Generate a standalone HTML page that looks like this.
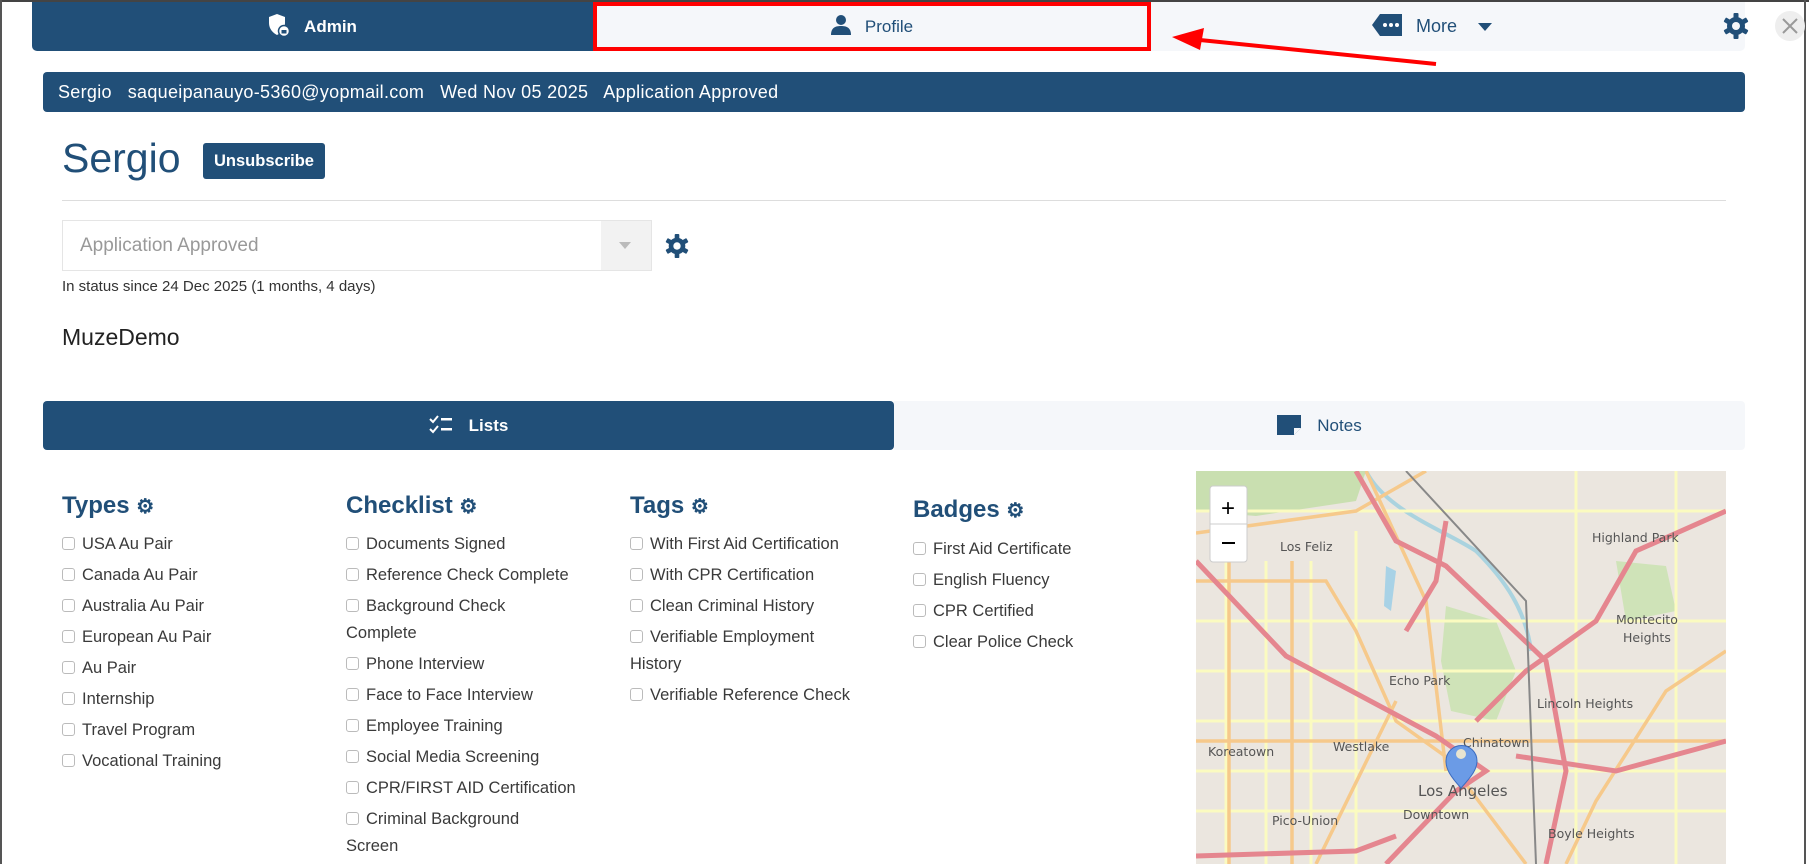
<!DOCTYPE html>
<html><head><meta charset="utf-8"><style>
*{box-sizing:border-box;margin:0;padding:0}
body{width:1809px;height:864px;overflow:hidden;background:#fff;font-family:"Liberation Sans",sans-serif;color:#222;position:relative}
.a{position:absolute}
.blue{background:#214f78;color:#fff}
.chk{position:absolute;font-size:16.5px;color:#3a3a3a;line-height:27px}
.chk i{display:inline-block;width:13px;height:13px;border:1px solid #bbb;border-radius:3px;margin-right:7px;vertical-align:-1px}
h3{position:absolute;font-size:24px;color:#214f78;font-weight:bold}
</style></head><body>
<div class="a" style="left:0;top:0;width:1809px;height:2px;background:#444"></div>
<div class="a" style="left:1804px;top:0;width:2px;height:864px;background:#555"></div>
<div class="a" style="left:0;top:0;width:2px;height:864px;background:#555"></div>
<!-- top nav -->
<div class="a" style="left:32px;top:2px;width:1713px;height:49px;background:#f5f7fa;border-radius:0 0 5px 5px"></div>
<div class="a blue" style="left:32px;top:2px;width:561px;height:49px;border-radius:0 0 0 5px;font-size:17px;font-weight:bold;line-height:49px;text-align:center">
<svg width="22" height="24" viewBox="0 0 22 24" style="vertical-align:-5px;margin-right:14px"><path d="M9 1 L17 4 V10 C17 16 13 20 9 22 C5 20 1 16 1 10 V4Z" fill="#fff"/><circle cx="16" cy="18" r="5.5" fill="#fff" stroke="#214f78" stroke-width="1.5"/><rect x="13.5" y="17" width="5" height="3.5" fill="#214f78"/></svg>Admin</div>
<div class="a" style="left:593px;top:2px;width:558px;height:49px;border:4px solid #f00;background:#f5f7fa;color:#214f78;font-size:17px;line-height:41px;text-align:center">
<svg width="20" height="20" viewBox="0 0 20 20" style="vertical-align:-3px;margin-right:14px"><circle cx="10" cy="5" r="5" fill="#214f78"/><path d="M0 20 C0 13 4 11 10 11 C16 11 20 13 20 20Z" fill="#214f78"/></svg>Profile</div>
<div class="a" style="left:1372px;top:14px;font-size:18px;color:#214f78;line-height:24px">
<svg width="30" height="22" viewBox="0 0 30 22" style="vertical-align:-4px;margin-right:14px"><path d="M8 0 H30 V22 H8 L0 11Z" fill="#214f78"/><circle cx="13" cy="11" r="2" fill="#fff"/><circle cx="19" cy="11" r="2" fill="#fff"/><circle cx="25" cy="11" r="2" fill="#fff"/></svg>More
<svg width="14" height="10" viewBox="0 0 14 10" style="margin-left:16px"><path d="M0 1 H14 L7 9Z" fill="#214f78"/></svg></div>
<svg class="a" style="left:1723px;top:13px" width="26" height="26" viewBox="0 0 26 26"><g fill="#214f78"><circle cx="13" cy="13" r="9"/><g id="t"><rect x="10.5" y="0" width="5" height="6" rx="1"/><rect x="10.5" y="20" width="5" height="6" rx="1"/></g><use href="#t" transform="rotate(60 13 13)"/><use href="#t" transform="rotate(120 13 13)"/></g><circle cx="13" cy="13" r="4" fill="#f5f7fa"/></svg>
<div class="a" style="left:1775px;top:11px;width:30px;height:30px;border-radius:50%;background:#eee"></div>
<svg class="a" style="left:1781px;top:17px" width="18" height="18"><path d="M2 2 L16 16 M16 2 L2 16" stroke="#999" stroke-width="2"/></svg>
<!-- arrow -->
<svg class="a" style="left:1160px;top:25px" width="290" height="45"><path d="M276 39 L40 15" stroke="#f00" stroke-width="4"/><path d="M12 12 L44 3 L40 25Z" fill="#f00"/></svg>
<!-- info bar -->
<div class="a blue" style="left:43px;top:72px;width:1702px;height:40px;border-radius:4px;font-size:18px;line-height:40px;padding-left:15px;letter-spacing:0.3px">Sergio &nbsp; saqueipanauyo-5360@yopmail.com &nbsp; Wed Nov 05 2025 &nbsp; Application Approved</div>
<div class="a" style="left:62px;top:135px;font-size:41px;color:#214f78">Sergio</div>
<div class="a blue" style="left:203px;top:143px;width:122px;height:36px;border-radius:3px;font-size:16.5px;font-weight:bold;line-height:36px;text-align:center">Unsubscribe</div>
<div class="a" style="left:62px;top:200px;width:1664px;height:1px;background:#ddd"></div>
<div class="a" style="left:62px;top:220px;width:590px;height:51px;border:1px solid #e5e5e5;font-size:19px;color:#999;line-height:49px;padding-left:17px">Application Approved</div>
<div class="a" style="left:601px;top:221px;width:50px;height:49px;background:#f2f2f2"></div>
<svg class="a" style="left:619px;top:242px" width="12" height="8"><path d="M0 0H12L6 7Z" fill="#bbb"/></svg>
<svg class="a" style="left:665px;top:234px" width="24" height="24" viewBox="0 0 26 26"><g fill="#214f78"><circle cx="13" cy="13" r="9"/><g id="t2"><rect x="10.5" y="0" width="5" height="6" rx="1"/><rect x="10.5" y="20" width="5" height="6" rx="1"/></g><use href="#t2" transform="rotate(60 13 13)"/><use href="#t2" transform="rotate(120 13 13)"/></g><circle cx="13" cy="13" r="4" fill="#fff"/></svg>
<div class="a" style="left:62px;top:278px;font-size:15px;color:#333">In status since 24 Dec 2025 (1 months, 4 days)</div>
<div class="a" style="left:62px;top:324px;font-size:23px;color:#222">MuzeDemo</div>
<!-- tabs -->
<div class="a" style="left:894px;top:401px;width:851px;height:49px;background:#f5f7fa;border-radius:0 4px 4px 0;font-size:17px;color:#214f78;line-height:49px;text-align:center">
<svg width="24" height="20" viewBox="0 0 24 20" style="vertical-align:-4px;margin-right:16px"><path d="M0 0 H24 V13 L17 20 H0Z" fill="#214f78"/><path d="M17 20 V13 H24Z" fill="#f5f7fa"/></svg>Notes</div>
<div class="a blue" style="left:43px;top:401px;width:851px;height:49px;border-radius:4px;font-size:17px;font-weight:bold;line-height:49px;text-align:center">
<svg width="24" height="20" viewBox="0 0 24 20" style="vertical-align:-4px;margin-right:16px"><path d="M1 4 L4 7 L9 1 M1 14 L4 17 L9 11" stroke="#fff" stroke-width="2" fill="none"/><rect x="12" y="3" width="11" height="2.5" fill="#fff"/><rect x="12" y="13" width="11" height="2.5" fill="#fff"/></svg>Lists</div>
<!-- lists -->
<h3 style="left:62px;top:492px">Types <span style="font-size:20px">⚙</span></h3>
<h3 style="left:346px;top:492px">Checklist <span style="font-size:20px">⚙</span></h3>
<h3 style="left:630px;top:492px">Tags <span style="font-size:20px">⚙</span></h3>
<h3 style="left:913px;top:496px">Badges <span style="font-size:20px">⚙</span></h3>
<div class="chk" style="left:62px;top:529px;line-height:31px;width:260px">
<div><i></i>USA Au Pair</div><div><i></i>Canada Au Pair</div><div><i></i>Australia Au Pair</div><div><i></i>European Au Pair</div><div><i></i>Au Pair</div><div><i></i>Internship</div><div><i></i>Travel Program</div><div><i></i>Vocational Training</div></div>
<div class="chk" style="left:346px;top:529px;line-height:31px;width:280px">
<div><i></i>Documents Signed</div><div><i></i>Reference Check Complete</div><div style="line-height:27px;margin-top:2px;margin-bottom:2px"><i></i>Background Check<br>Complete</div><div><i></i>Phone Interview</div><div><i></i>Face to Face Interview</div><div><i></i>Employee Training</div><div><i></i>Social Media Screening</div><div><i></i>CPR/FIRST AID Certification</div><div style="line-height:27px;margin-top:2px"><i></i>Criminal Background<br>Screen</div></div>
<div class="chk" style="left:630px;top:529px;line-height:31px;width:280px">
<div><i></i>With First Aid Certification</div><div><i></i>With CPR Certification</div><div><i></i>Clean Criminal History</div><div style="line-height:27px;margin-top:2px;margin-bottom:2px"><i></i>Verifiable Employment<br>History</div><div><i></i>Verifiable Reference Check</div></div>
<div class="chk" style="left:913px;top:534px;line-height:31px;width:260px">
<div><i></i>First Aid Certificate</div><div><i></i>English Fluency</div><div><i></i>CPR Certified</div><div><i></i>Clear Police Check</div></div>
<!-- map -->
<svg class="a" style="left:1196px;top:471px" width="530" height="393" viewBox="0 0 530 393">
<rect width="530" height="393" fill="#ebe6df"/>
<path d="M0 0 H170 L160 30 L60 45 L0 40Z" fill="#c9dfb0"/>
<path d="M250 135 L300 150 L320 200 L300 250 L255 240 L245 190Z" fill="#cfe3b8"/>
<path d="M420 90 L470 95 L480 140 L430 150Z" fill="#cfe3b8"/>
<path d="M190 95 L200 100 L195 140 L188 135Z" fill="#a8d2e6"/>
<path d="M170 0 C190 40 250 60 280 80 C310 110 330 140 335 180" stroke="#aad3df" stroke-width="4" fill="none"/>
<g stroke="#fbfbc0" stroke-width="3" fill="none">
<path d="M0 40 H530"/><path d="M0 150 H530"/><path d="M0 200 H530"/><path d="M0 250 H530"/><path d="M0 300 H530"/><path d="M0 340 H530"/>
<path d="M30 90 V393"/><path d="M70 90 V393"/><path d="M115 90 V393"/><path d="M160 60 V393"/><path d="M380 0 V393"/><path d="M480 0 V393"/>
</g>
<g stroke="#f6c98b" stroke-width="3.5" fill="none">
<path d="M0 62 L160 40 L230 0"/><path d="M0 110 H130 L160 160 L200 250 L270 300"/><path d="M33 90 V393"/><path d="M96 90 V393"/>
<path d="M0 270 H530"/><path d="M170 0 L230 130 L250 300"/><path d="M530 180 L470 220 L400 330 L370 393"/>
<path d="M200 230 L120 393"/><path d="M260 300 L330 393"/>
</g>
<g stroke="#e5868f" stroke-width="5" fill="none">
<path d="M0 90 L90 185 L240 265 L290 300 L260 320 L190 393"/>
<path d="M160 0 L200 70 L250 95 L350 190 L370 300 L350 393"/>
<path d="M250 50 L240 110 L210 160"/>
<path d="M530 40 L440 80 L400 150 L330 200 L280 250"/>
<path d="M320 285 L420 300 L530 270"/><path d="M0 385 L160 380 L200 365"/>
</g>
<path d="M210 0 L330 130 L340 393" stroke="#888" stroke-width="2" fill="none"/>
<g font-family="DejaVu Sans,sans-serif" font-size="12.5" fill="#555">
<text x="84" y="80">Los Feliz</text><text x="396" y="71">Highland Park</text><text x="420" y="153">Montecito</text><text x="427" y="171">Heights</text>
<text x="193" y="214">Echo Park</text><text x="341" y="237">Lincoln Heights</text><text x="137" y="280">Westlake</text>
<text x="12" y="285">Koreatown</text><text x="267" y="276">Chinatown</text><text x="76" y="354">Pico-Union</text>
<text x="207" y="348">Downtown</text><text x="352" y="367">Boyle Heights</text><text x="222" y="325" font-size="15">Los Angeles</text></g>
<path d="M265 317 C254 305 250 298 250 290 A15 15 0 0 1 281 290 C281 298 276 305 265 317Z" fill="#6b9be6" stroke="#3b6bc0"/>
<circle cx="265" cy="283" r="5" fill="#e8e4d0"/>
<rect x="14" y="15" width="37" height="76" rx="3" fill="#fff" stroke="#ccc"/><path d="M14 53 H51" stroke="#ccc"/>
<text x="32" y="45" text-anchor="middle" font-size="24" font-family="Liberation Sans" fill="#000">+</text>
<rect x="26" y="71" width="13" height="2" fill="#000"/>
</svg>
</body></html>
